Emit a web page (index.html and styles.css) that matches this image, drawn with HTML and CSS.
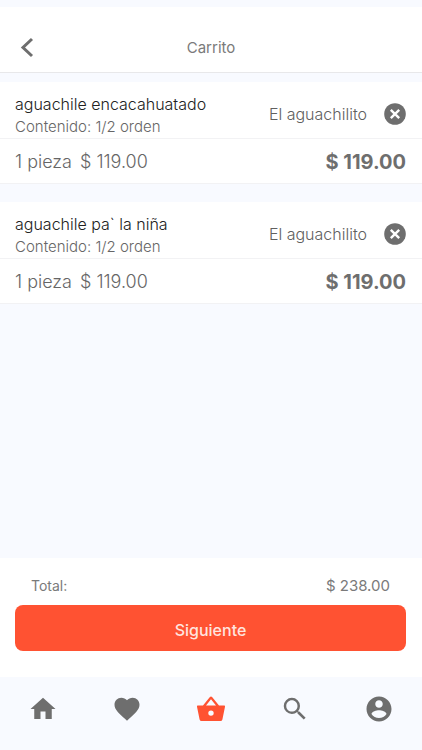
FILE: index.html
```html
<!DOCTYPE html>
<html lang="es">
<head>
<meta charset="utf-8">
<meta name="viewport" content="width=device-width, initial-scale=1">
<title>Carrito</title>
<link rel="stylesheet" href="styles.css">
</head>
<body>
<header class="header">
  <button class="icon-button" type="button" aria-label="Volver">
    <svg class="back-icon" viewBox="0 0 24 24"><path d="M16 3.500L7 12l9 8.500" fill="none" stroke="currentColor" stroke-width="3"/></svg>
  </button>
  <h1 class="title">Carrito</h1>
</header>
<main class="cart">
  <article class="item">
    <div class="item-head">
      <div class="product">
        <h2 class="name">aguachile encacahuatado</h2>
        <p class="content">Contenido: 1/2 orden</p>
      </div>
      <span class="store">El aguachilito</span>
      <button class="icon-button" type="button" aria-label="Quitar aguachile encacahuatado">
        <svg class="remove-icon" viewBox="0 0 22 22"><circle cx="11" cy="11" r="10.800" fill="currentColor"/><path d="M6.800 6.800l8.400 8.400M15.200 6.800l-8.400 8.400" stroke="#fff" stroke-width="2.400"/></svg>
      </button>
    </div>
    <div class="item-price">
      <span class="quantity">1 pieza</span>
      <span class="unit">$ 119.00</span>
      <strong class="amount">$ 119.00</strong>
    </div>
  </article>
  <article class="item">
    <div class="item-head">
      <div class="product">
        <h2 class="name">aguachile pa` la niña</h2>
        <p class="content">Contenido: 1/2 orden</p>
      </div>
      <span class="store">El aguachilito</span>
      <button class="icon-button" type="button" aria-label="Quitar aguachile pa` la niña">
        <svg class="remove-icon" viewBox="0 0 22 22"><circle cx="11" cy="11" r="10.800" fill="currentColor"/><path d="M6.800 6.800l8.400 8.400M15.200 6.800l-8.400 8.400" stroke="#fff" stroke-width="2.400"/></svg>
      </button>
    </div>
    <div class="item-price">
      <span class="quantity">1 pieza</span>
      <span class="unit">$ 119.00</span>
      <strong class="amount">$ 119.00</strong>
    </div>
  </article>
</main>
<section class="summary">
  <div class="total"><span class="total-label">Total:</span><span>$ 238.00</span></div>
  <button class="next" type="button">Siguiente</button>
</section>
<nav class="tabs" aria-label="Principal">
  <a class="tab" href="#inicio" aria-label="Inicio"><svg viewBox="0 0 24 24"><path d="M10 20v-6h4v6h5v-8h3L12 3 2 12h3v8z"/></svg></a>
  <a class="tab" href="#favoritos" aria-label="Favoritos"><svg viewBox="0 0 24 24"><path d="M12 21.350l-1.450-1.320C5.400 15.360 2 12.280 2 8.500 2 5.420 4.420 3 7.500 3c1.740 0 3.410.81 4.500 2.090C13.090 3.810 14.760 3 16.500 3 19.580 3 22 5.420 22 8.500c0 3.780-3.400 6.860-8.550 11.540L12 21.350z"/></svg></a>
  <a class="tab tab-active" href="#carrito" aria-label="Carrito" aria-current="page"><svg viewBox="0 0 30 30"><path fill-rule="evenodd" d="M1.800 11.500H7L13.700 3.300Q15 1.800 16.300 3.300L23 11.500h5.200Q29.300 11.500 29 12.800L26.400 25.500Q26 27 24.500 27h-19Q4 27 3.600 25.500L1 12.800Q.7 11.500 1.800 11.500zM10 11.500h10L15 5.300zM15 16.400a2.700 2.700 0 1 0 0 5.400a2.700 2.700 0 1 0 0-5.400z"/></svg></a>
  <a class="tab" href="#buscar" aria-label="Buscar"><svg viewBox="0 0 24 24"><path d="M15.500 14h-.79l-.28-.27A6.470 6.470 0 0 0 16 9.500 6.500 6.500 0 1 0 9.500 16c1.610 0 3.090-.59 4.230-1.570l.27.28v.79l5 4.990L20.490 19l-4.990-5zm-6 0C7.010 14 5 11.990 5 9.500S7.010 5 9.500 5 14 7.010 14 9.500 11.990 14 9.500 14z"/></svg></a>
  <a class="tab" href="#cuenta" aria-label="Cuenta"><svg viewBox="0 0 24 24"><path d="M12 2C6.480 2 2 6.480 2 12s4.480 10 10 10 10-4.480 10-10S17.520 2 12 2zm0 3c1.660 0 3 1.340 3 3s-1.340 3-3 3-3-1.340-3-3 1.340-3 3-3zm0 14.200c-2.500 0-4.710-1.280-6-3.220.03-1.990 4-3.080 6-3.080 1.990 0 5.970 1.090 6 3.080-1.290 1.940-3.500 3.220-6 3.220z"/></svg></a>
</nav>
</body>
</html>
```

FILE: styles.css
```css
* {
  box-sizing: border-box;
}

body {
  margin: 0;
  min-height: 100vh;
  padding-top: 7px;
  display: flex;
  flex-direction: column;
  background: #f8faff;
  color: #7a7a7a;
  font-family: Inter, "Liberation Sans", sans-serif;
}

h1, h2, p {
  margin: 0;
  font-weight: 400;
}

svg {
  display: block;
  fill: currentColor;
}

.header {
  display: grid;
  grid-template-columns: 24px 1fr 24px;
  align-items: center;
  padding: 28px 16px 12px;
  background: #fff;
  border-bottom: 1px solid #e8e8ea;
}

.icon-button {
  padding: 0;
  border: 0;
  background: none;
  color: #6e6e6e;
  cursor: pointer;
}

.back-icon {
  width: 24px;
  height: 25px;
}

.title {
  font-size: 15px;
  line-height: 20px;
  text-align: center;
}

.cart {
  flex: 1;
  display: flex;
  flex-direction: column;
  gap: 18px;
  padding-top: 9px;
}

.item {
  background: #fff;
  border-bottom: 1px solid #f2f2f4;
}

.item-head {
  display: flex;
  align-items: center;
  padding: 8px 16px 0 15px;
  border-bottom: 1px solid #f2f2f4;
}

.product {
  flex: 1;
  padding-top: 2px;
}

.name {
  color: #222;
  font-size: 16px;
  font-weight: 300;
  line-height: 24px;
}

.content {
  font-size: 15px;
  font-weight: 300;
  line-height: 22px;
  color: #666;
}

.store {
  margin-right: 17px;
  color: #606060;
  font-size: 16px;
  font-weight: 300;
}

.remove-icon {
  width: 22px;
  height: 22px;
}

.item-price {
  display: flex;
  align-items: center;
  padding: 11px 16px 9px 15px;
  font-size: 18px;
  line-height: 24px;
}

.quantity,
.unit {
  color: #666;
  font-weight: 300;
}

.unit {
  margin-left: 8px;
}

.amount {
  margin-left: auto;
  color: #6e6e6e;
  font-size: 20px;
  font-weight: 700;
}

.summary {
  padding: 18px 16px 26px 15px;
  background: #fff;
}

.total {
  display: flex;
  justify-content: space-between;
  padding: 0 16px;
  font-size: 15px;
  line-height: 20px;
}

.total-label {
  font-size: 14px;
}

.next {
  display: block;
  width: 100%;
  height: 46px;
  margin-top: 9px;
  border: 0;
  border-radius: 8px;
  background: #ff5232;
  color: #ffe4df;
  font: 500 16px/20px Inter, "Liberation Sans", sans-serif;
  padding: 4px 0 0;
  cursor: pointer;
}

.tabs {
  display: flex;
  justify-content: space-between;
  padding: 17px 28px 26px;
}

.tab {
  color: #6e6e6e;
}

.tab svg {
  width: 30px;
  height: 30px;
}

.tab-active {
  color: #ff5232;
}
```
